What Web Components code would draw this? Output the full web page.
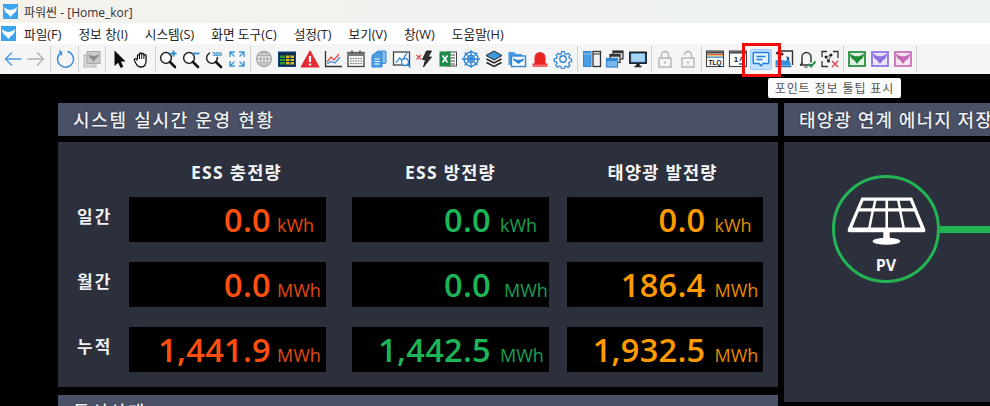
<!DOCTYPE html>
<html lang="ko">
<head>
<meta charset="utf-8">
<title>파워씬</title>
<style>
html,body{margin:0;padding:0;background:#000;height:406px;overflow:hidden;font-family:"Open Sans","Noto Sans CJK KR",sans-serif}
</style>
</head>
<body>
<power-app>
  <title-bar>파워씬 - [Home_kor]</title-bar>
  <menu-bar>
    <span>파일(F)</span><span>정보 창(I)</span><span>시스템(S)</span><span>화면 도구(C)</span><span>설정(T)</span><span>보기(V)</span><span>창(W)</span><span>도움말(H)</span>
  </menu-bar>
  <tool-bar>
    <tool-btn icon="back"></tool-btn><tool-btn icon="forward"></tool-btn><tool-sep w="6"></tool-sep>
    <tool-btn icon="refresh"></tool-btn><tool-sep w="4"></tool-sep>
    <tool-btn icon="graymail"></tool-btn><tool-sep w="4"></tool-sep>
    <tool-btn icon="cursor"></tool-btn><tool-btn icon="hand"></tool-btn><tool-sep w="3"></tool-sep>
    <tool-btn icon="zoomin"></tool-btn><tool-btn icon="zoomout"></tool-btn><tool-btn icon="zoom100"></tool-btn><tool-btn icon="fit"></tool-btn><tool-sep w="4"></tool-sep>
    <tool-btn icon="globe"></tool-btn><tool-btn icon="table"></tool-btn><tool-btn icon="warn"></tool-btn><tool-btn icon="chart"></tool-btn><tool-btn icon="calendar"></tool-btn><tool-btn icon="copies"></tool-btn><tool-btn icon="seek"></tool-btn><tool-btn icon="bolt"></tool-btn><tool-btn icon="excel"></tool-btn><tool-btn icon="wheel"></tool-btn><tool-btn icon="layers"></tool-btn><tool-btn icon="folder"></tool-btn><tool-btn icon="alarm"></tool-btn><tool-btn icon="gear"></tool-btn><tool-sep w="6"></tool-sep>
    <tool-btn icon="columns"></tool-btn><tool-btn icon="windows"></tool-btn><tool-btn icon="monitor"></tool-btn><tool-sep w="4"></tool-sep>
    <tool-btn icon="lock"></tool-btn><tool-btn icon="unlock"></tool-btn><tool-sep w="4"></tool-sep>
    <tool-btn icon="tlq"></tool-btn><tool-btn icon="onea"></tool-btn><tool-btn icon="bubble" active></tool-btn><tool-btn icon="pict"></tool-btn><tool-btn icon="bellok"></tool-btn><tool-btn icon="netx"></tool-btn><tool-sep w="4"></tool-sep>
    <tool-btn icon="mailgreen"></tool-btn><tool-btn icon="mailpurple"></tool-btn><tool-btn icon="mailpink"></tool-btn><tool-sep w="4"></tool-sep>
  </tool-bar>
  <hint-tip>포인트 정보 툴팁 표시</hint-tip>
  <dash-board>
    <dash-column slot="left">
      <panel-header>시스템 실시간 운영 현황</panel-header>
      <stat-panel>
        <col-head style="grid-column:1"></col-head>
        <col-head style="padding-left:62px;grid-column:2">ESS 충전량</col-head>
        <col-head style="padding-left:53px;grid-column:3">ESS 방전량</col-head>
        <col-head style="padding-left:41px;grid-column:4">태양광 발전량</col-head>

        <row-label>일간</row-label>
        <ess-cell tone="red" value="0.0" unit="kWh" end="142" ux="148"></ess-cell>
        <ess-cell tone="green" value="0.0" unit="kWh" end="139" ux="148"></ess-cell>
        <ess-cell tone="amber" value="0.0" unit="kWh" end="139" ux="148"></ess-cell>

        <row-label>월간</row-label>
        <ess-cell tone="red" value="0.0" unit="MWh" end="142" ux="148"></ess-cell>
        <ess-cell tone="green" value="0.0" unit="MWh" end="139" ux="152"></ess-cell>
        <ess-cell tone="amber" value="186.4" unit="MWh" end="139" ux="148"></ess-cell>

        <row-label>누적</row-label>
        <ess-cell tone="red" value="1,441.9" unit="MWh" end="142" ux="148"></ess-cell>
        <ess-cell tone="green" value="1,442.5" unit="MWh" end="139" ux="148"></ess-cell>
        <ess-cell tone="amber" value="1,932.5" unit="MWh" end="139" ux="148"></ess-cell>
      </stat-panel>
      <panel-header>통신상태</panel-header>
    </dash-column>
    <dash-column slot="right">
      <panel-header style="--ls:1.100px">태양광 연계 에너지 저장</panel-header>
      <flow-panel><pv-node>PV</pv-node><flow-line></flow-line></flow-panel>
    </dash-column>
  </dash-board>
</power-app>

<script>
const wing = (frame, fill, bg) => `<rect x="2" y="3" width="16" height="14" fill="${bg}" stroke="${frame}" stroke-width="1.700"/><path d="M3 4.500c2.500 2 4.700 2.800 7 2.800s4.500-.8 7-2.800c-.2 3.500-1.700 5.800-4.300 6.800L10 15l-2.700-3.700C4.700 10.300 3.200 8 3 4.500z" fill="${fill}"/>`;
const glass = `<circle cx="8" cy="9" r="5.400" fill="#fff" stroke="#222" stroke-width="1.500"/><path d="M12 13l5 5" stroke="#111" stroke-width="2.600" stroke-linecap="round"/>`;
const ICONS = {
  back:`<path d="M18.500 10H2.500M9 3.500L2.500 10 9 16.500" fill="none" stroke="#4d9be8" stroke-width="1.400"/>`,
  forward:`<path d="M1.500 10h16M11 3.500l6.500 6.500-6.500 6.500" fill="none" stroke="#b0b0b0" stroke-width="1.400"/>`,
  refresh:`<path d="M6.200 3.400A8 8 0 1 0 12.500 2.400" fill="none" stroke="#3a8fdf" stroke-width="1.500"/><path d="M4 1.500l2.700 2 -.6 3.200" fill="none" stroke="#3a8fdf" stroke-width="1.300"/>`,
  graymail:`<rect x="2" y="6" width="12" height="12" fill="#d8d8d8" stroke="#b5b5b5"/><rect x="5" y="2.500" width="13" height="12" fill="#c8c8c8" stroke="#a8a8a8"/><path d="M6.500 5c2 1.600 3.500 2 5 2s3-.4 5-2c-.3 3-1.500 4.500-3 5L11.500 12.500 9.500 10c-1.500-.5-2.700-2-3-5z" fill="#8d8d8d"/>`,
  cursor:`<path d="M5.500 1.500v15.500l3.700-3.300 2.400 5.300 2.700-1.200-2.400-5.200h4.700z" fill="#0c0c0c"/>`,
  hand:`<path d="M5.500 10V6.800c0-1.500 2-1.500 2 0V5.200c0-1.600 2.200-1.600 2.200 0v.2c0-1.500 2.200-1.500 2.200.2v1c0-1.400 2.200-1.400 2.200.2v4.500c0 4-2 6.700-5 6.700-2.600 0-3.900-1-5-3.300L2.400 11.500c-.7-1.500 1-2.500 2-1.300L5.500 11.500" fill="#fff" stroke="#111" stroke-width="1.300" stroke-linejoin="round"/><path d="M7.500 7v3M9.700 6v4M11.900 6.500V10" stroke="#111" stroke-width="1"/>`,
  zoomin: glass+`<path d="M12.500 4.500h6M15.500 1.500v6" stroke="#2f8fdc" stroke-width="1.900"/>`,
  zoomout: glass+`<path d="M11.500 4.500h7" stroke="#2f8fdc" stroke-width="1.900"/>`,
  zoom100: glass+`<rect x="6" y="2" width="14" height="6" fill="#f5f5f5" fill-opacity=".85"/><text x="13" y="7.300" font-family="Liberation Sans" font-size="6.200" font-weight="700" letter-spacing="-.2" fill="#2f7fd0" text-anchor="middle">100</text>`,
  fit:`<path d="M3 8V3h5M3 3l4.500 4.500M17 8V3h-5M17 3l-4.500 4.500M3 12v5h5M3 17l4.500-4.500M17 12v5h-5M17 17l-4.500-4.500" fill="none" stroke="#3d9ade" stroke-width="1.400"/>`,
  globe:`<circle cx="10" cy="10" r="7.500" fill="#e4e4e4" stroke="#a9a9a9" stroke-width="1.300"/><ellipse cx="10" cy="10" rx="3.500" ry="7.500" fill="none" stroke="#a9a9a9"/><path d="M10 2.500v15M2.500 10h15M3.500 6.300h13M3.500 13.700h13" stroke="#a9a9a9"/>`,
  table:`<rect x="1.500" y="3" width="17" height="14.500" fill="#0d2a55" stroke="#123f86"/><rect x="3" y="6.500" width="5" height="9" fill="#2f9a2b"/><path d="M3 9.500h5M3 12.500h5" stroke="#0d2a55"/><rect x="9" y="6.500" width="8" height="9" fill="#d9c221"/><path d="M9 9.500h8M9 12.500h8M13 6.500v9" stroke="#0d2a55"/>`,
  warn:`<path d="M10 1.800L19 18H1z" fill="#e52b33" stroke="#e52b33" stroke-linejoin="round"/><path d="M10 7v6" stroke="#fff" stroke-width="2.200"/><circle cx="10" cy="15.500" r="1.200" fill="#fff"/>`,
  chart:`<path d="M2.500 2v15.500H19" fill="none" stroke="#333" stroke-width="1.300"/><path d="M4 13l4-5 3 3 5-6" fill="none" stroke="#e2534a" stroke-width="1.300"/><path d="M4 15l4-2.500 4 1.500 5-6" fill="none" stroke="#3d8fdd" stroke-width="1.200"/>`,
  calendar:`<rect x="2" y="3.500" width="16" height="14" fill="#f5f5f5" stroke="#444" stroke-width="1.300"/><rect x="2" y="3.500" width="16" height="3.500" fill="#7a7a7a"/><path d="M6 1.500v3M14 1.500v3" stroke="#444" stroke-width="1.300"/><path d="M4 9.500h12M4 12h12M4 14.500h12" stroke="#777" stroke-width="1.200" stroke-dasharray="1.700 .9"/>`,
  copies:`<rect x="8" y="2" width="9" height="12.500" rx="1" fill="#8cc0ee" stroke="#2f86d5"/><path d="M3 6.500l4-3h6v14.500H3z" fill="#4a9de3" stroke="#2f86d5"/><path d="M5.500 10h5M5.500 12.500h5M5.500 15h5" stroke="#fff"/>`,
  seek:`<rect x="1.500" y="3" width="16" height="13" fill="#fff" stroke="#444" stroke-width="1.300"/><path d="M4 14l3.500-5 2.500 2.500L15 4" fill="none" stroke="#2f86d5" stroke-width="1.300"/><circle cx="13" cy="13" r="3.500" fill="#fff" stroke="#2f86d5" stroke-width="1.400"/><path d="M15.500 15.500l3 3" stroke="#2f86d5" stroke-width="1.600"/>`,
  bolt:`<path d="M1.500 6l4.500 4.500M6 6l-4.500 4.500" stroke="#e24b4b" stroke-width="1.300"/><path d="M11.500 2L7.500 10.500h3L8.500 18l8-10h-3.500L16.500 2z" fill="#333" stroke="#111" stroke-width=".8"/>`,
  excel:`<rect x="9" y="3" width="9.500" height="14" fill="#fff" stroke="#444"/><path d="M11 6h6M11 9h6M11 12h6M11 15h6" stroke="#444"/><rect x="1.500" y="2.500" width="11" height="15" fill="#1f8a4a"/><path d="M4.500 6.500l5 7M9.500 6.500l-5 7" stroke="#fff" stroke-width="1.600"/>`,
  wheel:`<circle cx="10" cy="10" r="7" fill="none" stroke="#2f86d5" stroke-width="1.400"/><circle cx="10" cy="10" r="3.500" fill="none" stroke="#2f86d5" stroke-width="1.300"/><path d="M10 1v18M1 10h18M3.600 3.600l12.800 12.800M16.400 3.600L3.600 16.400" stroke="#2f86d5" stroke-width="1.300"/>`,
  layers:`<path d="M10 2l8 4.500-8 4.500-8-4.500z" fill="#3b97d8" stroke="#222"/><path d="M2.500 10l7.500 4 7.500-4" fill="none" stroke="#222" stroke-width="1.500"/><path d="M2.500 13.500l7.500 4 7.500-4" fill="none" stroke="#222" stroke-width="1.500"/>`,
  folder:`<path d="M1.500 3h6l1.500 2h6v3H1.500z" fill="#4a9de3"/><rect x="1.500" y="5" width="3" height="11" fill="#4a9de3"/><rect x="4.500" y="7" width="14" height="10.500" fill="#fff" stroke="#2f86d5" stroke-width="1.400"/><path d="M6 9c2 1.400 3.500 1.800 5.500 1.800S15 10.400 17 9c-.3 2.400-1.300 3.500-3 4l-2.500 2-2.500-2c-1.700-.5-2.700-1.600-3-4z" fill="#2f86d5"/>`,
  alarm:`<path d="M4.500 15V8.500a5.500 5.500 0 0 1 11 0V15z" fill="#ea2323"/><path d="M2.500 15h15v3h-15z" fill="#f06a6a"/><path d="M2.500 15h15" stroke="#ea2323"/>`,
  gear:`<circle cx="10" cy="10" r="3.200" fill="none" stroke="#2f86d5" stroke-width="1.400"/><path d="M8.500 1.800h3l.5 2.500 1.600.7 2.200-1.400 2.100 2.100-1.400 2.200.7 1.600 2.300.5v3l-2.500.5-.7 1.600 1.400 2.200-2.100 2.100-2.200-1.400-1.600.7-.5 2.300h-3l-.5-2.500-1.600-.7-2.200 1.400-2.100-2.100 1.400-2.200-.7-1.600-2.300-.5v-3l2.500-.5.7-1.600L2.400 5.700l2.100-2.100 2.200 1.400L8 4.300z" transform="translate(1 1) scale(.9)" fill="none" stroke="#2f86d5" stroke-width="1.400" stroke-linejoin="round"/>`,
  columns:`<rect x="1.500" y="2.500" width="7.500" height="15" fill="#4a9de3" stroke="#2f86d5"/><path d="M1.500 5h7.500" stroke="#8cc0ee"/><rect x="11" y="2.500" width="7.500" height="15" fill="#f2f2f2" stroke="#333" stroke-width="1.300"/><path d="M11 5h7.500" stroke="#333"/>`,
  windows:`<rect x="8" y="2" width="10" height="8" fill="#e5e5e5" stroke="#333" stroke-width="1.200"/><rect x="8" y="2" width="10" height="2.200" fill="#333"/><rect x="5" y="5.500" width="10" height="8" fill="#e5e5e5" stroke="#333" stroke-width="1.200"/><rect x="5" y="5.500" width="10" height="2.200" fill="#333"/><rect x="1.500" y="9.500" width="11" height="8.500" fill="#7ab8ec" stroke="#2f86d5" stroke-width="1.200"/><rect x="1.500" y="9.500" width="11" height="2.500" fill="#2f86d5"/>`,
  monitor:`<rect x="1" y="2.500" width="18" height="12.500" rx=".8" fill="#222"/><rect x="3" y="4.500" width="14" height="8.500" fill="#a5d3f4" stroke="#4a9de3" stroke-dasharray="2 1"/><path d="M9 15h2v2.500H9zM6.500 17.500h7" stroke="#222" stroke-width="1.400"/>`,
  lock:`<rect x="4" y="9" width="12" height="9" fill="#f4f4f4" stroke="#b0b0b0" stroke-width="1.300"/><path d="M6.500 9V6a3.500 3.500 0 0 1 7 0v3" fill="none" stroke="#b0b0b0" stroke-width="1.300"/><circle cx="10" cy="13.500" r="1.100" fill="#b0b0b0"/>`,
  unlock:`<rect x="4" y="9" width="12" height="9" fill="#f4f4f4" stroke="#b0b0b0" stroke-width="1.300"/><path d="M6.500 6a3.500 3.500 0 0 1 7 0v3" fill="none" stroke="#b0b0b0" stroke-width="1.300"/><circle cx="10" cy="13.500" r="1.100" fill="#b0b0b0"/>`,
  tlq:`<rect x="1.500" y="2" width="17" height="15.500" fill="#fff" stroke="#444" stroke-width="1.100"/><rect x="2" y="2.500" width="16" height="2" fill="#444"/><rect x="2" y="5" width="16" height="1.300" fill="#e25050"/><rect x="2" y="6.300" width="16" height="1.300" fill="#e6c336"/><rect x="2" y="7.600" width="16" height="1.300" fill="#3d8fdd"/><text x="10" y="16" font-family="Liberation Sans" font-size="6.500" font-weight="700" fill="#111" text-anchor="middle">TLQ</text>`,
  onea:`<rect x="1.500" y="2" width="17" height="15.500" fill="#fff" stroke="#444" stroke-width="1.100"/><rect x="2" y="2.500" width="16" height="2" fill="#444"/><text x="8" y="13" font-family="Liberation Sans" font-size="8" font-weight="700" fill="#222" text-anchor="middle">1</text><text x="13.500" y="12" font-family="Liberation Sans" font-size="6" font-weight="700" fill="#222" text-anchor="middle">A</text><path d="M11 15h6" stroke="#3d8fdd" stroke-width="2"/>`,
  bubble:`<path d="M3 3.500h14a.8.800 0 0 1 .8.8v9.400a.8.800 0 0 1-.8.800h-5l-2 2.500-2-2.500H3a.8.800 0 0 1-.8-.8V4.300a.8.800 0 0 1 .8-.8z" fill="#e6f3ff" stroke="#1f7fd6" stroke-width="1.400"/><path d="M5.500 7.500h9M5.500 10.500h6" stroke="#1f7fd6" stroke-width="1.400"/>`,
  pict:`<path d="M7 2h11.500v14" fill="none" stroke="#333" stroke-width="1.400"/><circle cx="3.500" cy="4" r="1.600" fill="#333"/><circle cx="8" cy="5" r="1.600" fill="#333"/><path d="M1.500 16.500v-5l5-1 5 1.500 3-4 2.500 8.500z" fill="#2f8fdc"/><path d="M1.500 17.500h16" stroke="#1f6fc0" stroke-width="1.400"/><path d="M12 7l3.500 2-1.500 2z" fill="#123f86"/>`,
  bellok:`<path d="M3 16h12M5 16V8a4.500 4.500 0 0 1 9 0v5.500" fill="none" stroke="#333" stroke-width="1.400"/><path d="M3 16c1.500-.6 2-1.500 2-3M7.500 17.500c.8 1 2.200 1 3 0" fill="none" stroke="#333" stroke-width="1.200"/><path d="M11.500 15l2.500 2.500 4.500-5" fill="none" stroke="#1d9150" stroke-width="1.900"/>`,
  netx:`<path d="M2 8V2.500h5M13 2.500h5V9M2 12v5.500h6" fill="none" stroke="#333" stroke-width="1.300"/><circle cx="6" cy="8" r="1.500" fill="#222"/><circle cx="11" cy="6" r="1.500" fill="#222"/><circle cx="8.500" cy="12" r="1.500" fill="#222"/><path d="M6 8l5-2-2.500 6z" fill="none" stroke="#222" stroke-width=".7"/><path d="M12 12l6 6M18 12l-6 6" stroke="#e04848" stroke-width="1.500"/>`,
  mailgreen: wing('#1e8a36','#1e8a36','#dff0e2'),
  mailpurple: wing('#8a70e0','#8a70e0','#e9e4fa'),
  mailpink: wing('#c66ab8','#c66ab8','#f4e4f0'),
  solar:`<path d="M14 1.500h46.500L72.500 30.500q1 2.500-1 2.500H2.500q-2 0-1-2.500z" fill="#fff" stroke="#fff" stroke-width="1.200" stroke-linejoin="round"/><g fill="#2b2f3a"><path d="M15.500 4H25.200L23.700 11H12.500zM27.600 4H36V11H26.100zM38.500 4H46.900L48.400 11H38.500zM49.300 4H59L62 11H50.800zM11 14H22.800L19.800 29H5zM25.200 14H36V29H22.200zM38.400 14H48.800L51.800 29H38.400zM51.200 14H63L69 29H54.200z"/></g><path d="M34 33h6v8h-6z" fill="#fff"/><ellipse cx="37" cy="42" rx="13" ry="3.300" fill="#fff"/>`
};
const logo = `<svg viewBox="0 0 15 15" width="15" height="15" aria-hidden="true"><rect width="15" height="15" fill="#39a5ee"/><path d="M1 3c2.500 2.200 4.500 3 6.500 3S11.500 5.200 14 3c-.2 4-2 6-4 7l-2.500 3L5 10C3 9 1.200 7 1 3z" fill="#fff"/></svg>`;

class Base extends HTMLElement{
  render(html){ if(!this.shadowRoot) this.attachShadow({mode:'open'}); this.shadowRoot.innerHTML = html; }
}
const def = (name, make) => customElements.define(name, class extends Base{ connectedCallback(){ this.render(make(this)); } });

def('power-app',()=>`<style>:host{display:flex;flex-direction:column;position:relative;width:990px;height:406px;overflow:hidden;background:#000;color:#222;font-family:"Open Sans","Noto Sans CJK KR",sans-serif}</style><slot></slot>`);
def('title-bar',()=>`<style>:host{display:flex;align-items:center;height:23px;padding-left:3px;gap:6px;background:linear-gradient(90deg,#f5f2eb,#eef1f2 70%,#eff2f3);font-size:12px;color:#333}</style>${logo}<slot></slot>`);
def('menu-bar',()=>`<style>:host{display:flex;align-items:center;height:21px;background:#fff;padding-left:1px;font-size:12.700px;color:#222}.l{width:23px;display:flex}.m{display:flex;gap:17px}::slotted(span){white-space:nowrap}</style><span class="l">${logo}</span><span class="m"><slot></slot></span>`);
def('tool-bar',()=>`<style>:host{display:flex;align-items:center;height:30px;padding-left:1.500px;background:#f5f5f5;box-sizing:border-box}</style><slot></slot>`);
def('tool-btn',(el)=>`<style>
:host{display:flex;flex:none;position:relative;width:23px;height:30px;align-items:center;justify-content:center}
svg{display:block;position:relative;z-index:1}
.hl{position:absolute;left:.5px;top:5px;background:#c5e1ff;border:1px solid #9ccbff;border-radius:2px;box-sizing:border-box;width:22px;height:21px}
.box{position:absolute;left:-7.500px;top:-.700px;width:39.300px;height:34px;border:3.500px solid #f30a0a;box-sizing:border-box;z-index:2}
</style>${el.hasAttribute('active')?'<span class="hl"></span><span class="box"></span>':''}<svg viewBox="0 0 20 20" width="20" height="20" aria-hidden="true">${ICONS[el.getAttribute('icon')]||''}</svg>`);
def('tool-sep',(el)=>`<style>:host{display:flex;flex:none;justify-content:center;width:${el.getAttribute('w')}px;height:26px}i{display:block;width:1px;height:100%;background:#d2d2d2}</style><i></i>`);
def('hint-tip',()=>`<style>:host{position:absolute;left:768px;top:78px;width:133px;height:20px;box-sizing:border-box;display:flex;align-items:center;justify-content:center;background:#fbfbfb;border-radius:2px;font-size:12px;letter-spacing:.9px;color:#555;z-index:5;white-space:nowrap}</style><slot></slot>`);
def('dash-board',()=>`<style>:host{display:flex;gap:6px;padding:29px 0 0 58px;flex:1;min-height:0;background:#000}.l{display:flex;width:720px;flex:none}.r{display:flex;width:300px;flex:none}</style><div class="l"><slot name="left"></slot></div><div class="r"><slot name="right"></slot></div>`);
def('dash-column',()=>`<style>:host{display:flex;flex-direction:column;width:100%}</style><slot></slot>`);
def('panel-header',()=>`<style>:host{display:flex;align-items:center;flex:none;height:32.500px;box-sizing:border-box;padding-left:15px;background:#4a5065;color:#eef0f4;font-size:18px;font-weight:500;letter-spacing:var(--ls,1.700px);white-space:nowrap;text-shadow:0 0 2px rgba(0,0,0,.55)}</style><slot></slot>`);
def('stat-panel',()=>`<style>:host{display:grid;flex:none;height:245px;margin:6.500px 0 8px;background:#2c303c;grid-template-columns:71px 223px 214.500px 196px;grid-template-rows:55px 65px 65px 60px}</style><slot></slot>`);
def('col-head',()=>`<style>:host{display:block;grid-row:1;align-self:start;margin-top:18px;line-height:24px;font-size:17.500px;font-weight:700;color:#f4f5f8;white-space:nowrap;letter-spacing:1.300px}</style><slot></slot>`);
def('row-label',()=>`<style>:host{display:block;grid-column:1;padding-left:19px;line-height:40px;font-size:17px;font-weight:700;color:#f0f1f4;letter-spacing:2px;align-self:start}</style><slot></slot>`);
const TONES={red:['#ff4f0e','#e5480f'],green:['#1cb557','#19a04f'],amber:['#ff9b00','#e68b00']};
def('ess-cell',(el)=>{const t=TONES[el.getAttribute('tone')];const e=el.getAttribute('end'),u=el.getAttribute('ux');return `<style>
:host{display:grid;grid-template-columns:${e}px 1fr;align-items:baseline;width:196.500px;height:44.500px;box-sizing:border-box;background:#000;align-self:start;overflow:hidden;font-family:"Open Sans","Noto Sans",sans-serif;line-height:46px}
b{justify-self:end;font-weight:600;font-size:32.500px;letter-spacing:.3px;color:${t[0]};white-space:nowrap}
span{margin-left:${u-e}px;font-size:18px;color:${t[1]};white-space:nowrap}
</style><b>${el.getAttribute('value')}</b><span>${el.getAttribute('unit')}</span>`});
def('flow-panel',()=>`<style>:host{display:flex;align-items:center;flex:none;height:260px;margin-top:6.500px;box-sizing:border-box;padding:33px 0 119px 48px;background:#2c303c}</style><slot></slot>`);
def('flow-line',()=>`<style>:host{display:block;flex:1;height:6.500px;margin-top:1px;background:#22b455}</style>`);
def('pv-node',()=>`<style>:host{display:flex;flex-direction:column;align-items:center;flex:none;width:108px;height:108px;box-sizing:border-box;border:3.500px solid #22b455;border-radius:50%;padding-top:18px;color:#f3f4f6;font:700 16px "Open Sans",sans-serif}svg{display:block}span{margin-top:9px;line-height:20px}</style><svg viewBox="0 0 74 46" width="79" height="50" aria-hidden="true">${ICONS.solar}</svg><span><slot></slot></span>`);
</script>
</body>
</html>
